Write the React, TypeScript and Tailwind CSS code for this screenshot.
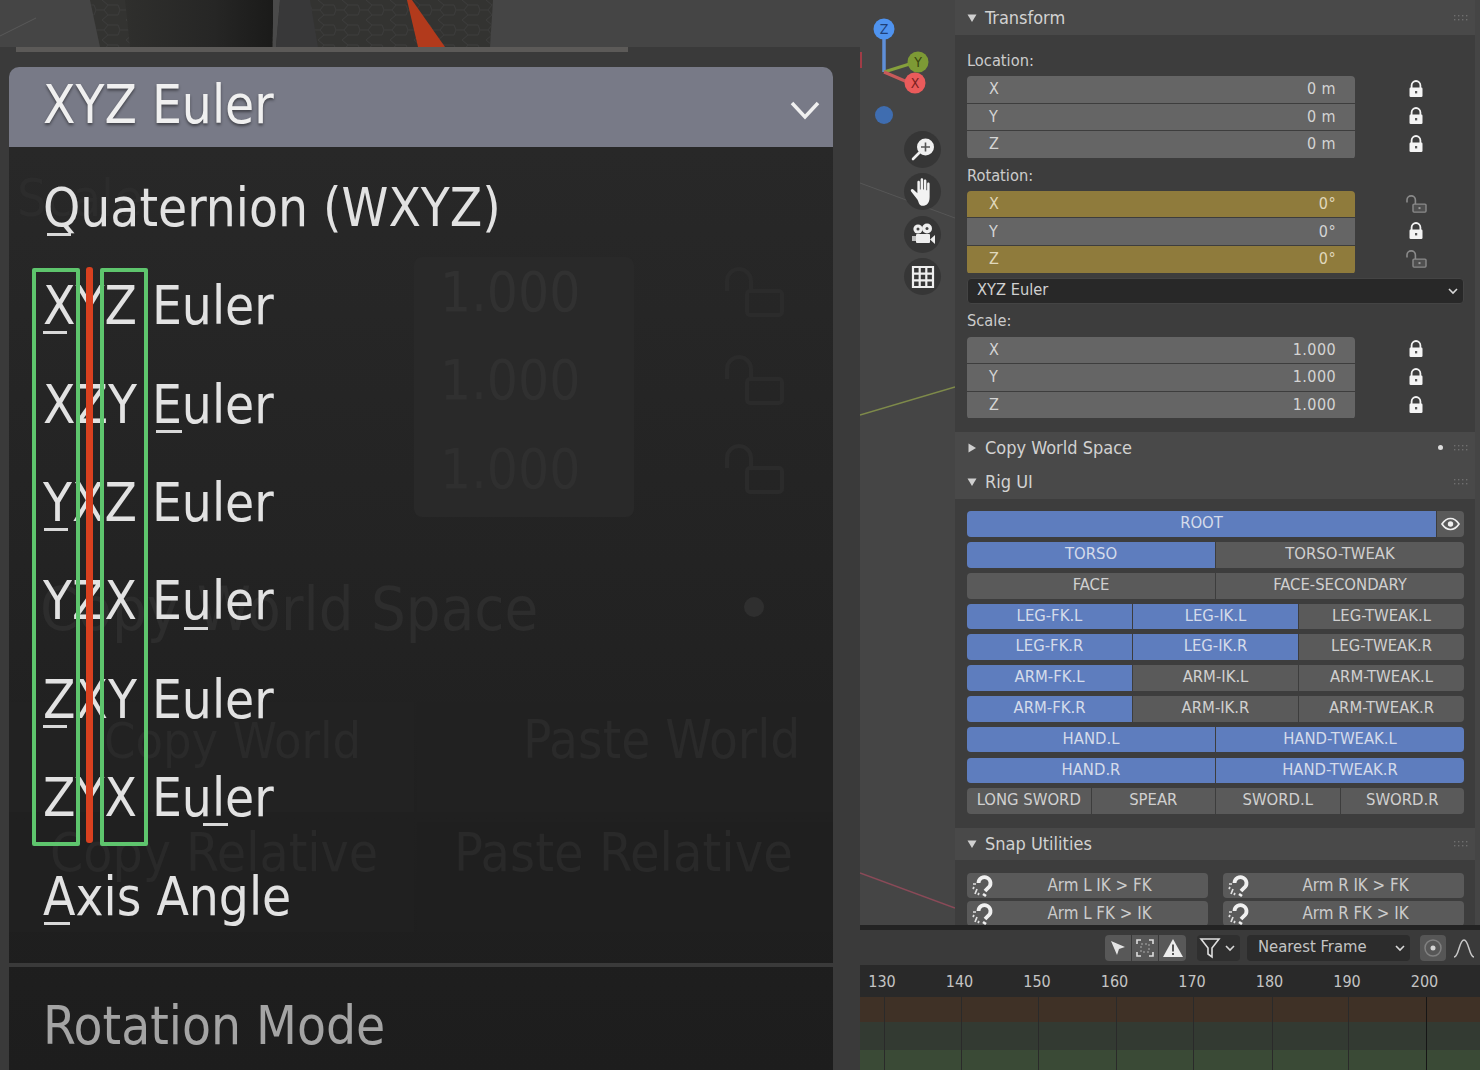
import React from "react";

const FONT = { fontFamily: '"DejaVu Sans Condensed", "DejaVu Sans", sans-serif' };

function Lock({ open = false }: { open?: boolean }) {
  if (open) {
    return (
      <svg width="24" height="20" viewBox="0 0.4 24 20">
        <path d="M3 8V5.500a4.200 4.200 0 0 1 8.400 0V10" fill="none" stroke="#8a8a8a" strokeWidth="1.600" />
        <rect x="9" y="9.500" width="13" height="8" rx="1" fill="#4f4f4f" stroke="#8a8a8a" strokeWidth="1.400" />
        <rect x="14.500" y="12.500" width="2" height="2" fill="#9a9a9a" />
      </svg>
    );
  }
  return (
    <svg width="16" height="20" viewBox="0 1 16 20">
      <path d="M3.600 9V6.400a4.400 4.400 0 0 1 8.800 0V9" fill="none" stroke="#f2f2f2" strokeWidth="1.800" />
      <rect x="1.500" y="8.500" width="13" height="9.500" rx="1.200" fill="#f4f4f4" />
      <rect x="7" y="12" width="2.200" height="2.400" fill="#555" />
    </svg>
  );
}

function Caret({ open = true }: { open?: boolean }) {
  return (
    <svg width="10" height="10" viewBox="0 0 10 10" className="shrink-0">
      {open ? <path d="M0.500 1.500H9.500L5 9Z" fill="#cfcfcf" /> : <path d="M1.500 0.500V9.500L9 5Z" fill="#cfcfcf" />}
    </svg>
  );
}

function Grip() {
  return (
    <svg width="16" height="8" viewBox="0 0 16 8" className="shrink-0">
      {[1, 5, 9, 13].map((x) =>
        [1, 5].map((y) => <rect key={`${x}-${y}`} x={x} y={y} width="1.400" height="1.400" fill="#6f6f6f" />),
      )}
    </svg>
  );
}

function PanelHeader({ title, open = true, dot = false, h }: { title: string; open?: boolean; dot?: boolean; h: string }) {
  return (
    <div className={`flex items-center bg-[#494949] pl-[12px] pr-[6px] ${h}`}>
      <Caret open={open} />
      <span className="ml-[8px] flex-1 text-[18px] leading-none text-[#d2d2d2]">{title}</span>
      {dot && <span className="mr-[10px] h-[5px] w-[5px] rounded-full bg-[#dddddd]" />}
      <Grip />
    </div>
  );
}

function Fields({ rows }: { rows: { axis: string; value: string; yellow?: boolean; open?: boolean }[] }) {
  return (
    <div className="flex">
      <div className="flex w-[388px] shrink-0 flex-col gap-[1px] overflow-hidden rounded-[4px]">
        {rows.map((r) => (
          <div
            key={r.axis}
            className={`flex h-[26.600px] items-center justify-between pl-[22px] pr-[19px] text-[16px] ${
              r.yellow ? "bg-[#8f7b3c] text-[#e0d8bc]" : "bg-[#656565] text-[#d4d4d4]"
            }`}
          >
            <span>{r.axis}</span>
            <span className="tracking-[0.400px]">{r.value}</span>
          </div>
        ))}
      </div>
      <div className="flex w-[122px] shrink-0 flex-col">
        {rows.map((r) => (
          <div key={r.axis} className="flex h-[27.600px] items-center justify-center">
            <Lock open={r.open} />
          </div>
        ))}
      </div>
    </div>
  );
}

function Btn({ t, on = false }: { t: string; on?: boolean }) {
  return (
    <div
      className={`flex min-w-0 flex-1 items-center justify-center whitespace-nowrap pb-[1px] text-[16.500px] ${
        on ? "bg-[#5e7dbe] text-[#d4dbea]" : "bg-[#5a5a5a] text-[#d0d0d0]"
      }`}
    >
      {t}
    </div>
  );
}

function RigRow({ items }: { items: [string, boolean][] }) {
  return (
    <div className="flex h-[25.600px] gap-[1px] overflow-hidden rounded-[4px]">
      {items.map(([t, on]) => (
        <Btn key={t} t={t} on={on} />
      ))}
    </div>
  );
}

function Magnet() {
  return (
    <svg width="26" height="24" viewBox="0 0 26 24" className="absolute left-[2px] top-[1px]">
      <path d="M9.500 9a6 6 0 1 1 9.500 5l-3 3" fill="none" stroke="#f0f0f0" strokeWidth="3.800" />
      <path d="M14 20l3 2" stroke="#f0f0f0" strokeWidth="2.600" />
      <path d="M4 10h3M5 13l-1 2M8 15l-2 5M10 19l-1 2" stroke="#e0e0e0" strokeWidth="1.700" />
    </svg>
  );
}

function SnapBtn({ t }: { t: string }) {
  return (
    <div className="relative flex h-[25px] w-[241px] items-center justify-center rounded-[4px] bg-[#5a5a5a] pl-[24px] text-[16.800px] text-[#cccccc]">
      <Magnet />
      {t}
    </div>
  );
}

function NavBtn({ children }: { children: React.ReactNode }) {
  return <div className="flex h-[37px] w-[37px] items-center justify-center rounded-full bg-[#363636]">{children}</div>;
}

function Viewport() {
  return (
    <div className="relative flex w-[95px] shrink-0 flex-col items-end overflow-hidden bg-[#454545] pr-[14px] pt-[131px]">
      <svg className="absolute left-0 top-0" width="95" height="925" viewBox="0 0 95 925">
        <path d="M0 183L95 218" stroke="#565656" strokeWidth="1" />
        <path d="M0 415L95 387" stroke="#7e8a4a" strokeWidth="1.500" />
        <path d="M0 873L95 908" stroke="#8a4a58" strokeWidth="1.500" />
        <rect x="0" y="52" width="2" height="16" fill="#a03c46" />
        <path d="M24 72V38" stroke="#5f8fd8" strokeWidth="3.500" />
        <path d="M24 72L56 62" stroke="#86a03c" strokeWidth="3" />
        <path d="M24 72L52 84" stroke="#c85a5a" strokeWidth="3" />
        <circle cx="24" cy="29" r="10.500" fill="#4f93ef" />
        <circle cx="58" cy="62" r="10.500" fill="#7d9a35" />
        <circle cx="55" cy="83" r="10.500" fill="#ea5b5b" />
        <circle cx="24" cy="115" r="9" fill="#3f6db0" />
        <text x="24" y="34" textAnchor="middle" fontSize="14" fill="#1f3f78" fontFamily="DejaVu Sans Condensed">Z</text>
        <text x="58" y="67" textAnchor="middle" fontSize="14" fill="#38460f" fontFamily="DejaVu Sans Condensed">Y</text>
        <text x="55" y="88" textAnchor="middle" fontSize="14" fill="#7a1f1f" fontFamily="DejaVu Sans Condensed">X</text>
      </svg>
      <div className="relative flex flex-col gap-[5.400px]">
        <NavBtn>
          <svg width="26" height="26" viewBox="0 0 26 26">
            <circle cx="15.500" cy="10" r="8.500" fill="#f0f0f0" />
            <path d="M15.500 5.500v9M11 10h9" stroke="#555" strokeWidth="1.600" />
            <path d="M9 16L3 22" stroke="#f0f0f0" strokeWidth="2.600" strokeLinecap="round" />
          </svg>
        </NavBtn>
        <NavBtn>
          <svg width="30" height="30" viewBox="1 1 23 24">
            <path
              d="M8 19L3 12.500c-1-1.500 1-2.500 2-1.300L8 14V5c0-1.400 2-1.400 2 0v6h.6V3c0-1.400 2-1.400 2 0v8h.6V4c0-1.400 2-1.400 2 0v7.500h.6V6.500c0-1.400 2-1.400 2 0V17c0 5-2.500 7-5.500 7S9.500 22 8 19Z"
              fill="#f2f2f2"
            />
          </svg>
        </NavBtn>
        <NavBtn>
          <svg width="26" height="26" viewBox="0 0 26 26">
            <circle cx="8" cy="8" r="4.600" fill="#eeeeee" />
            <circle cx="17" cy="7.500" r="5" fill="#eeeeee" />
            <circle cx="8" cy="8" r="1.500" fill="#444" />
            <circle cx="17" cy="7.500" r="1.500" fill="#444" />
            <rect x="6" y="13" width="14" height="9" rx="1" fill="#eeeeee" />
            <path d="M2 15v5h4v-5Z" fill="#bdbdbd" />
            <path d="M25 14v9l-5-4.500Z" fill="#eeeeee" />
          </svg>
        </NavBtn>
        <NavBtn>
          <svg width="24" height="24" viewBox="0 0 24 24">
            <path d="M2 2h20v20H2ZM2 8.700h20M2 15.300h20M8.700 2v20M15.300 2v20" fill="none" stroke="#eeeeee" strokeWidth="2.200" />
          </svg>
        </NavBtn>
      </div>
    </div>
  );
}

function FieldLabel({ t, mt }: { t: string; mt: string }) {
  return <div className={`${mt} mb-[6px] flex h-[18px] items-center text-[16.300px] text-[#cccccc]`}>{t}</div>;
}

function PropertiesPanel() {
  return (
    <div className="flex min-w-0 flex-1 bg-[#3d3d3d]">
      <div className="w-[520px] shrink-0 overflow-hidden">
        <PanelHeader title="Transform" h="h-[35px]" />
        <div className="pl-[12px]">
          <FieldLabel t="Location:" mt="mt-[17px]" />
          <Fields
            rows={[
              { axis: "X", value: "0 m" },
              { axis: "Y", value: "0 m" },
              { axis: "Z", value: "0 m" },
            ]}
          />
          <FieldLabel t="Rotation:" mt="mt-[8px]" />
          <Fields
            rows={[
              { axis: "X", value: "0°", yellow: true, open: true },
              { axis: "Y", value: "0°" },
              { axis: "Z", value: "0°", yellow: true, open: true },
            ]}
          />
          <div className="mt-[4px] flex h-[26px] w-[497px] items-center justify-between rounded-[4px] border border-[#444] bg-[#282828] pl-[9px] pr-[4px] text-[16.300px] text-[#d0d0d0]">
            <span>XYZ Euler</span>
            <svg width="12" height="8" viewBox="0 0 12 8">
              <path d="M2 2l4 4 4-4" fill="none" stroke="#d8d8d8" strokeWidth="1.600" />
            </svg>
          </div>
          <FieldLabel t="Scale:" mt="mt-[9px]" />
          <Fields
            rows={[
              { axis: "X", value: "1.000" },
              { axis: "Y", value: "1.000" },
              { axis: "Z", value: "1.000" },
            ]}
          />
        </div>
        <div className="mt-[13px]" />
        <PanelHeader title="Copy World Space" open={false} dot h="h-[34px] pb-[3px]" />
        <PanelHeader title="Rig UI" h="h-[33px] pb-[2px]" />
        <div className="flex w-[509px] flex-col gap-[5.200px] pl-[12px] pt-[12px]">
          <div className="flex h-[25.600px] gap-[1px] overflow-hidden rounded-[4px]">
            <Btn t="ROOT" on />
            <div className="flex w-[27px] items-center justify-center bg-[#5a5a5a]">
              <svg width="19" height="14" viewBox="0 0 19 14">
                <path d="M1 7c2.500-3.800 5.200-5.500 8.500-5.500S15.500 3.200 18 7c-2.500 3.800-5.200 5.500-8.500 5.500S3.500 10.800 1 7Z" fill="none" stroke="#efefef" strokeWidth="1.700" />
                <circle cx="9.500" cy="7" r="2.700" fill="#efefef" />
              </svg>
            </div>
          </div>
          <RigRow items={[["TORSO", true], ["TORSO-TWEAK", false]]} />
          <RigRow items={[["FACE", false], ["FACE-SECONDARY", false]]} />
          <RigRow items={[["LEG-FK.L", true], ["LEG-IK.L", true], ["LEG-TWEAK.L", false]]} />
          <RigRow items={[["LEG-FK.R", true], ["LEG-IK.R", true], ["LEG-TWEAK.R", false]]} />
          <RigRow items={[["ARM-FK.L", true], ["ARM-IK.L", false], ["ARM-TWEAK.L", false]]} />
          <RigRow items={[["ARM-FK.R", true], ["ARM-IK.R", false], ["ARM-TWEAK.R", false]]} />
          <RigRow items={[["HAND.L", true], ["HAND-TWEAK.L", true]]} />
          <RigRow items={[["HAND.R", true], ["HAND-TWEAK.R", true]]} />
          <RigRow items={[["LONG SWORD", false], ["SPEAR", false], ["SWORD.L", false], ["SWORD.R", false]]} />
        </div>
        <div className="mt-[14px]" />
        <PanelHeader title="Snap Utilities" h="h-[32px]" />
        <div className="grid w-[509px] grid-cols-[241px_241px] justify-between gap-y-[3px] pl-[12px] pt-[13px]">
          <SnapBtn t="Arm L IK > FK" />
          <SnapBtn t="Arm R IK > FK" />
          <SnapBtn t="Arm L FK > IK" />
          <SnapBtn t="Arm R FK > IK" />
        </div>
      </div>
      <div className="flex-1 bg-[#454545]" />
    </div>
  );
}

function Timeline() {
  const nums = [130, 140, 150, 160, 170, 180, 190, 200];
  const lines = [24, 101, 178, 256, 333, 412, 488, 566];
  return (
    <div className="relative flex h-[145px] shrink-0 flex-col border-t-[5px] border-[#232323]">
      <div className="flex h-[35px] items-center justify-end gap-[7px] bg-[#3a3a3a] pr-[5px]">
        <div className="flex h-[26px] items-center gap-[1px] overflow-hidden rounded-[4px]">
          <div className="flex h-full w-[26px] items-center justify-center bg-[#585858]">
            <svg width="18" height="18" viewBox="0 0 18 18"><path d="M2 2l14 6-6 2-2 6Z" fill="#e4e4e4" /></svg>
          </div>
          <div className="flex h-full w-[26px] items-center justify-center bg-[#585858]">
            <svg width="20" height="20" viewBox="0 0 20 20">
              <path d="M2 6V2h4M14 2h4v4M18 14v4h-4M6 18H2v-4" fill="none" stroke="#dcdcdc" strokeWidth="1.600" />
              <path d="M6 6h8v8H6Z" fill="none" stroke="#aaa" strokeWidth="1" strokeDasharray="2 2" />
            </svg>
          </div>
          <div className="flex h-full w-[27px] items-center justify-center bg-[#585858]">
            <svg width="22" height="20" viewBox="0 0 22 20">
              <path d="M11 1L21 19H1Z" fill="#ececec" />
              <path d="M11 6.500v7M11 15v2" stroke="#555" strokeWidth="2" />
            </svg>
          </div>
        </div>
        <div className="ml-[4px] flex h-[26px] w-[43px] items-center gap-[3px] rounded-[4px] bg-[#2f2f2f] pl-[2px]">
          <svg width="22" height="22" viewBox="0 0 22 22">
            <path d="M2 2h18l-7 9v9l-4-3v-6Z" fill="none" stroke="#dedede" strokeWidth="1.600" />
          </svg>
          <svg width="12" height="8" viewBox="0 0 12 8"><path d="M2 2l4 4 4-4" fill="none" stroke="#d8d8d8" strokeWidth="1.600" /></svg>
        </div>
        <div className="flex h-[26px] w-[163px] items-center justify-between rounded-[4px] bg-[#2c2c2c] pl-[11px] pr-[4px] text-[16.500px] text-[#c4c4c4]">
          <span>Nearest Frame</span>
          <svg width="12" height="8" viewBox="0 0 12 8"><path d="M2 2l4 4 4-4" fill="none" stroke="#d8d8d8" strokeWidth="1.600" /></svg>
        </div>
        <div className="ml-[3px] flex h-[26px] w-[26px] items-center justify-center rounded-[4px] bg-[#565656]">
          <svg width="20" height="20" viewBox="0 0 20 20">
            <circle cx="10" cy="10" r="8" fill="none" stroke="#808080" strokeWidth="1.500" />
            <circle cx="10" cy="10" r="2.500" fill="#d4d4d4" />
          </svg>
        </div>
        <svg width="22" height="22" viewBox="0 0 22 22">
          <path d="M1 20c5 0 5-17 10-17s5 17 10 17" fill="none" stroke="#c8c8c8" strokeWidth="1.500" />
        </svg>
      </div>
      <div className="relative flex h-[32px] items-center bg-[#292929] text-[16px] text-[#c4c4c4]">
        {nums.map((n, i) => (
          <span key={n} className="absolute top-[5px] w-[40px] text-center" style={{ left: 2 + i * 77.5 }}>
            {n}
          </span>
        ))}
      </div>
      <div className="relative flex flex-1 flex-col">
        <div className="h-[25px] bg-[#3f3126]" />
        <div className="h-[28px] bg-[#333a32]" />
        <div className="flex-1 bg-[#3a4a36]" />
        {lines.map((x, i) => (
          <div
            key={x}
            className={`absolute bottom-0 top-0 w-[1px] ${i === 7 ? "bg-[#161616]" : "bg-[#2a2a2a]"}`}
            style={{ left: x }}
          />
        ))}
      </div>
    </div>
  );
}

function MenuRow({ children, bar }: { children: React.ReactNode; bar: [number, number] }) {
  return (
    <div className="relative flex h-[98.400px] items-center pl-[34px] text-[52.700px] leading-none text-[#e2e2e2]">
      <span>{children}</span>
      <span className="absolute top-[74px] h-[3px] bg-[#d8d8d8]" style={{ left: bar[0], width: bar[1] }} />
    </div>
  );
}

function Ghost({ cls, t }: { cls: string; t: string }) {
  return <span className={`absolute whitespace-nowrap leading-none ${cls}`}>{t}</span>;
}

function GhostLock({ cls }: { cls: string }) {
  return (
    <svg width="62" height="52" viewBox="0 0 62 52" className={`absolute ${cls}`}>
      <path d="M4 24V14a12 12 0 0 1 24 0v12" fill="none" stroke="#2b2b2b" strokeWidth="4" />
      <rect x="24" y="24" width="35" height="24" rx="3" fill="none" stroke="#2b2b2b" strokeWidth="4" />
    </svg>
  );
}

function LeftColumn() {
  return (
    <div className="flex w-[860px] shrink-0 flex-col bg-[#454545]">
      <svg width="860" height="47" viewBox="0 0 860 47" className="shrink-0">
        <defs>
          <pattern id="hex" width="24" height="20" patternUnits="userSpaceOnUse">
            <path d="M6 0l6 5h10l2 5-2 5H12l-6 5M12 5L8 10l4 5M0 10h8" fill="none" stroke="#3f3f3f" strokeWidth="0.800" />
          </pattern>
          <linearGradient id="shade" x1="0" x2="1" y1="0" y2="0">
            <stop offset="0" stopColor="#2f2f2d" />
            <stop offset="0.6" stopColor="#262625" />
            <stop offset="1" stopColor="#1a1a19" />
          </linearGradient>
        </defs>
        <path d="M0 36L36 18" stroke="#585858" strokeWidth="1" />
        <path d="M90 0H493L490 47H100Z" fill="#333331" />
        <path d="M90 0H493L490 47H100Z" fill="url(#hex)" />
        <path d="M125 0H274L272 47H130Z" fill="url(#shade)" />
        <path d="M273 0H280L276 47H273Z" fill="#4a4a4a" />
        <path d="M280 0H310L318 47H276Z" fill="#383839" />
        <path d="M407 0H412L445 47H418Z" fill="#b23a1c" />
      </svg>
      <div className="flex flex-1 flex-col bg-[#3a3a3a]">
        <div className="ml-[16px] h-[5px] w-[612px] bg-[#5c5a58]" />
        <div className="relative ml-[9px] mt-[15px] flex w-[824px] flex-1 flex-col">
          <div className="flex h-[80px] items-center justify-between rounded-t-[10px] bg-[#787a87] pb-[4px] pl-[34px] pr-[13px] text-[52.700px] leading-none text-[#f0f0f0] [text-shadow:0_2px_3px_#0007]">
            <span>XYZ Euler</span>
            <svg width="30" height="20" viewBox="0 0 30 20" className="mt-[10px]">
              <path d="M2 3l13 14L28 3" fill="none" stroke="#f0f0f0" strokeWidth="3.500" />
            </svg>
          </div>
          <div className="relative flex flex-1 flex-col bg-gradient-to-b from-[#282828] to-[#1d1d1d] pt-[12px]">
            <div className="absolute left-[405px] top-[110px] h-[260px] w-[220px] rounded-[8px] bg-[#292929]" />
            <div className="absolute left-[0px] top-[555px] h-[110px] w-[405px] bg-[#222222]" />
            <div className="absolute left-[408px] top-[555px] h-[110px] w-[416px] bg-[#212121]" />
            <div className="absolute left-[0px] top-[675px] h-[110px] w-[405px] bg-[#202020]" />
            <div className="absolute left-[408px] top-[675px] h-[110px] w-[416px] bg-[#1f1f1f]" />
            <Ghost cls="left-[8px] top-[25px] text-[52px] text-[#2c2c2c]" t="Scale" />
            <Ghost cls="left-[431px] top-[118px] text-[54.500px] text-[#313131]" t="1.000" />
            <Ghost cls="left-[431px] top-[206px] text-[54.500px] text-[#303030]" t="1.000" />
            <Ghost cls="left-[431px] top-[295px] text-[54.500px] text-[#2f2f2f]" t="1.000" />
            <GhostLock cls="left-[714px] top-[120px]" />
            <GhostLock cls="left-[714px] top-[208px]" />
            <GhostLock cls="left-[714px] top-[297px]" />
            <Ghost cls="left-[31px] top-[431px] text-[61px] text-[#2d2d2d]" t="Copy World Space" />
            <span className="absolute left-[735px] top-[450px] h-[20px] w-[20px] rounded-full bg-[#2f2f2f]" />
            <Ghost cls="left-[95px] top-[569px] text-[50px] text-[#2a2a2a]" t="Copy World" />
            <Ghost cls="left-[514px] top-[567px] text-[52.500px] text-[#2a2a2a]" t="Paste World" />
            <Ghost cls="left-[41px] top-[679px] text-[53px] text-[#292929]" t="Copy Relative" />
            <Ghost cls="left-[445px] top-[679px] text-[53.500px] text-[#292929]" t="Paste Relative" />
            <MenuRow bar={[38, 24]}>Quaternion (WXYZ)</MenuRow>
            <MenuRow bar={[34, 24]}>XYZ Euler</MenuRow>
            <MenuRow bar={[147, 26]}>XZY Euler</MenuRow>
            <MenuRow bar={[35, 24]}>YXZ Euler</MenuRow>
            <MenuRow bar={[175, 24]}>YZX Euler</MenuRow>
            <MenuRow bar={[34, 24]}>ZXY Euler</MenuRow>
            <MenuRow bar={[194, 25]}>ZYX Euler</MenuRow>
            <MenuRow bar={[35, 26]}>Axis Angle</MenuRow>
            <div className="mt-[17px] h-[4px] bg-[#3a3a3a]" />
            <div className="relative flex flex-1 items-center pl-[34px] pt-[16px] text-[52.700px] leading-none text-[#a4a4a4]">Rotation Mode</div>
            <div className="absolute left-[23px] top-[121px] h-[578px] w-[48px] rounded-[2px] border-[4px] border-[#5ec56d]" />
            <div className="absolute left-[91px] top-[121px] h-[578px] w-[48px] rounded-[2px] border-[4px] border-[#5ec56d]" />
            <div className="absolute left-[77px] top-[120px] h-[576px] w-[7px] rounded-[3px] bg-[#d8401f]" />
          </div>
        </div>
      </div>
    </div>
  );
}

export default function App() {
  return (
    <div className="flex h-[1070px] w-[1480px] overflow-hidden" style={FONT}>
      <LeftColumn />
      <div className="flex min-w-0 flex-1 flex-col">
        <div className="flex h-[925px] overflow-hidden">
          <Viewport />
          <PropertiesPanel />
        </div>
        <Timeline />
      </div>
    </div>
  );
}
